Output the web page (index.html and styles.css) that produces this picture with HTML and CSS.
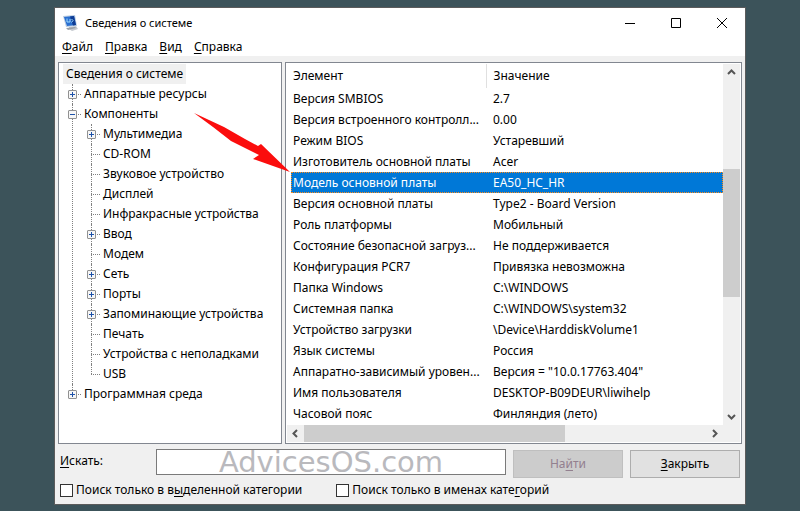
FILE: index.html
```html
<!DOCTYPE html>
<html lang="ru">
<head>
    <meta charset="UTF-8">
    <meta name="viewport" content="width=device-width, initial-scale=1.0">
    <title>Сведения о системе</title>
    <link rel="stylesheet" href="styles.css">
</head>
<body>
    <div class="window">
        <header class="titlebar">
            <svg class="app-icon" width="16" height="16" viewBox="0 0 16 16" aria-hidden="true">
                <path d="M6 12l7-1 2 3-6 2-3-2z" fill="#c4c8ce"/>
                <path d="M3 13l9-1 1 1-8 2z" fill="#9aa0a8"/>
                <path d="M0 1l12-1 2 11-11 1z" fill="#b9cbe0"/>
                <path d="M1 2l10-1 2 9-9 1z" fill="#2a6fd0"/>
                <path d="M7 1.500l4-.5 2 9-3 .4z" fill="#0f3c94"/>
                <path d="M4 3.500v3.500h3v-3M8.500 4l1.500 1.500-1.500 2" stroke="#9fdcff" fill="none"/>
            </svg>
            <h1>Сведения о системе</h1>
            <div class="window-buttons">
                <button type="button" aria-label="Свернуть">
                    <svg width="10" height="10" viewBox="0 0 10 10"><path d="M0 5.500h10" stroke="#000"/></svg>
                </button>
                <button type="button" aria-label="Развернуть">
                    <svg width="10" height="10" viewBox="0 0 10 10"><path d="M.5.5h9v9h-9z" stroke="#000" fill="none"/></svg>
                </button>
                <button type="button" aria-label="Закрыть окно">
                    <svg width="10" height="10" viewBox="0 0 10 10"><path d="M0 0l10 10M10 0L0 10" stroke="#000"/></svg>
                </button>
            </div>
        </header>

        <nav class="menu">
            <button type="button"><u>Ф</u>айл</button>
            <button type="button"><u>П</u>равка</button>
            <button type="button"><u>В</u>ид</button>
            <button type="button"><u>С</u>правка</button>
        </nav>

        <main class="panels">
            <div class="panel tree">
                <span class="root">Сведения о системе</span>
                <ul>
                    <li><button type="button" class="toggle plus" aria-label="Развернуть"></button>Аппаратные ресурсы</li>
                    <li><button type="button" class="toggle" aria-label="Свернуть"></button>Компоненты
                        <ul>
                            <li><button type="button" class="toggle plus" aria-label="Развернуть"></button>Мультимедиа</li>
                            <li>CD-ROM</li>
                            <li>Звуковое устройство</li>
                            <li>Дисплей</li>
                            <li>Инфракрасные устройства</li>
                            <li><button type="button" class="toggle plus" aria-label="Развернуть"></button>Ввод</li>
                            <li>Модем</li>
                            <li><button type="button" class="toggle plus" aria-label="Развернуть"></button>Сеть</li>
                            <li><button type="button" class="toggle plus" aria-label="Развернуть"></button>Порты</li>
                            <li><button type="button" class="toggle plus" aria-label="Развернуть"></button>Запоминающие устройства</li>
                            <li>Печать</li>
                            <li>Устройства с неполадками</li>
                            <li>USB</li>
                        </ul>
                    </li>
                    <li><button type="button" class="toggle plus" aria-label="Развернуть"></button>Программная среда</li>
                </ul>
            </div>

            <div class="panel details">
                <div class="list">
                    <table>
                        <thead>
                            <tr><th class="name">Элемент</th><th>Значение</th></tr>
                        </thead>
                        <tbody>
                            <tr><td>Версия SMBIOS</td><td>2.7</td></tr>
                            <tr><td>Версия встроенного контролл...</td><td>0.00</td></tr>
                            <tr><td>Режим BIOS</td><td>Устаревший</td></tr>
                            <tr><td>Изготовитель основной платы</td><td>Acer</td></tr>
                            <tr class="selected"><td>Модель основной платы</td><td>EA50_HC_HR</td></tr>
                            <tr><td>Версия основной платы</td><td>Type2 - Board Version</td></tr>
                            <tr><td>Роль платформы</td><td>Мобильный</td></tr>
                            <tr><td>Состояние безопасной загруз...</td><td>Не поддерживается</td></tr>
                            <tr><td>Конфигурация PCR7</td><td>Привязка невозможна</td></tr>
                            <tr><td>Папка Windows</td><td>C:\WINDOWS</td></tr>
                            <tr><td>Системная папка</td><td>C:\WINDOWS\system32</td></tr>
                            <tr><td>Устройство загрузки</td><td>\Device\HarddiskVolume1</td></tr>
                            <tr><td>Язык системы</td><td>Россия</td></tr>
                            <tr><td>Аппаратно-зависимый уровен...</td><td>Версия = "10.0.17763.404"</td></tr>
                            <tr><td>Имя пользователя</td><td>DESKTOP-B09DEUR\liwihelp</td></tr>
                            <tr><td>Часовой пояс</td><td>Финляндия (лето)</td></tr>
                        </tbody>
                    </table>
                </div>
                <div class="scroll vertical">
                    <svg width="9" height="9" viewBox="0 0 9 9"><path d="M1 6l3.500-3.500L8 6" stroke="#555" stroke-width="2" fill="none"/></svg>
                    <div class="track"><div class="thumb"></div></div>
                    <svg width="9" height="9" viewBox="0 0 9 9"><path d="M1 3l3.500 3.500L8 3" stroke="#555" stroke-width="2" fill="none"/></svg>
                </div>
                <div class="scroll horizontal">
                    <svg width="9" height="9" viewBox="0 0 9 9"><path d="M6 1L2.500 4.500 6 8" stroke="#555" stroke-width="2" fill="none"/></svg>
                    <div class="track"><div class="thumb"></div></div>
                    <svg width="9" height="9" viewBox="0 0 9 9"><path d="M3 1l3.500 3.500L3 8" stroke="#555" stroke-width="2" fill="none"/></svg>
                </div>
                <div class="corner"></div>
            </div>
        </main>

        <form class="search">
            <div class="search-row">
                <label for="query"><u>И</u>скать:</label>
                <input type="text" id="query" placeholder="AdvicesOS.com">
                <button type="button" disabled>На<u>й</u>ти</button>
                <button type="button"><u>З</u>акрыть</button>
            </div>
            <div class="options">
                <label><input type="checkbox"><span>Поиск только в в<u>ы</u>деленной категории</span></label>
                <label><input type="checkbox"><span>Поиск только в именах кате<u>г</u>орий</span></label>
            </div>
        </form>

        <svg class="arrow" width="98" height="61" viewBox="0 0 98 61" aria-hidden="true">
            <path d="M1 1L31 15 52 27 65 34 68 32 97 60 60 47 66 43 38 29 20 15z" fill="#fb0d0d"/>
        </svg>
    </div>
</body>
</html>
```
FILE: styles.css
```css
* {
    box-sizing: border-box;
}
body {
    margin: 0;
    padding: 7px 54px;
    background: #3c535a;
    font-family: "Noto Sans", sans-serif;
    font-size: 12px;
    line-height: 20px;
    color: #000;
}
button {
    font: inherit;
    color: inherit;
}
u {
    text-underline-offset: 2px;
}
.window {
    position: relative;
    border: 1px solid #5b5b5b;
    background: #f0f0f0;
}

/* title and menu */
.titlebar {
    display: flex;
    align-items: center;
    height: 30px;
    padding-left: 8px;
    background: #fff;
}
.titlebar h1 {
    flex: 1;
    margin: 0 0 0 6px;
    font-size: 11px;
    font-weight: normal;
}
.window-buttons {
    display: flex;
}
.window-buttons button {
    display: flex;
    align-items: center;
    justify-content: center;
    width: 46px;
    height: 28px;
    padding: 0;
    border: 0;
    background: none;
}
.menu {
    display: flex;
    gap: 12px;
    height: 18px;
    padding-left: 7px;
    background: #fff;
}
.menu button {
    padding: 0;
    border: 0;
    background: none;
    line-height: 18px;
}

/* panels */
.panels {
    display: grid;
    grid-template-columns: 224px 1fr;
    gap: 3px;
    padding: 6px 3px 0;
}
.panel {
    border: 1px solid #828790;
    background: #fff;
    white-space: nowrap;
}
.tree {
    padding: 1px 4px;
}
.root {
    display: inline-block;
    padding: 0 3px;
    background: #f0f0f0;
}
.tree ul {
    margin: 0;
    padding: 0;
    list-style: none;
}
.tree > ul {
    margin-left: 9px;
}
.tree li {
    position: relative;
    padding-left: 12px;
}
.tree li ul {
    margin-left: -5px;
    padding-left: 12px;
}
/* dotted guide lines */
.tree li::before {
    content: "";
    position: absolute;
    left: 0;
    top: 0;
    height: 100%;
    border-left: 1px dotted #808080;
}
.tree li:last-child::before {
    height: 10px;
}
.tree li::after {
    content: "";
    position: absolute;
    left: 0;
    top: 10px;
    width: 9px;
    border-top: 1px dotted #808080;
}
.toggle {
    position: absolute;
    z-index: 1;
    left: -4px;
    top: 6px;
    width: 9px;
    height: 9px;
    padding: 0;
    border: 1px solid #919191;
    border-radius: 1px;
    background: linear-gradient(#1d51a8, #1d51a8) center / 5px 1px no-repeat, #f6f6f6;
}
.toggle.plus {
    background: linear-gradient(#1d51a8, #1d51a8) center / 5px 1px no-repeat, linear-gradient(#1d51a8, #1d51a8) center / 1px 5px no-repeat, #f6f6f6;
}

.details {
    display: grid;
    grid-template-columns: 1fr 17px;
    grid-template-rows: 1fr 17px;
    padding: 1px;
}
.list {
    padding: 0 0 1px 4px;
    overflow: hidden;
}
table {
    width: 100%;
    border-collapse: collapse;
    table-layout: fixed;
}
th, td {
    height: 21px;
    padding: 0 0 0 2px;
    font-weight: normal;
    text-align: left;
}
th {
    height: 24px;
}
.name {
    width: 195px;
    border-right: 1px solid #e0e0e0;
}
th + th, td + td {
    padding-left: 7px;
}
.selected {
    background: #0078d7;
    color: #fff;
    outline: 1px dotted #ff8c1a;
    outline-offset: -1px;
}
.scroll {
    display: flex;
    align-items: center;
    background: #f0f0f0;
}
.scroll svg {
    margin: 4px;
    flex: none;
}
.track {
    flex: 1;
    display: flex;
}
.thumb {
    background: #cdcdcd;
}
.vertical {
    flex-direction: column;
}
.vertical .track {
    width: 100%;
    flex-direction: column;
    padding-top: 88px;
}
.vertical .thumb {
    height: 128px;
}
.horizontal .track {
    height: 100%;
}
.horizontal .thumb {
    width: 65%;
}
.corner {
    background: #f0f0f0;
}

/* search */
.search {
    padding: 5px 5px 4px;
}
.search-row {
    display: flex;
    gap: 7px;
}
.search-row label {
    width: 89px;
    line-height: 24px;
}
#query {
    flex: 1;
    min-width: 0;
    height: 26px;
    padding: 0;
    border: 1px solid #7a7a7a;
    background: #fff;
    font: 29px "DejaVu Sans", sans-serif;
    line-height: 24px;
    text-align: center;
}
#query::placeholder {
    color: #b9b9bd;
    opacity: 1;
}
.search-row button {
    width: 110px;
    height: 28px;
    margin-top: 1px;
    padding: 0;
    border: 1px solid #adadad;
    background: #e1e1e1;
}
.search-row button:disabled {
    border-color: #bfbfbf;
    background: #ccc;
    color: #93808f;
}
.options {
    display: flex;
    gap: 34px;
    padding-top: 2px;
}
.options label {
    display: flex;
    align-items: center;
    gap: 3px;
}
.options input {
    appearance: none;
    width: 13px;
    height: 13px;
    margin: 0;
    border: 1px solid #333;
    background: #fff;
}
.options input:checked {
    background: #0078d7;
}

/* red pointer over both panels */
.arrow {
    position: absolute;
    left: 138px;
    top: 104px;
}
```
